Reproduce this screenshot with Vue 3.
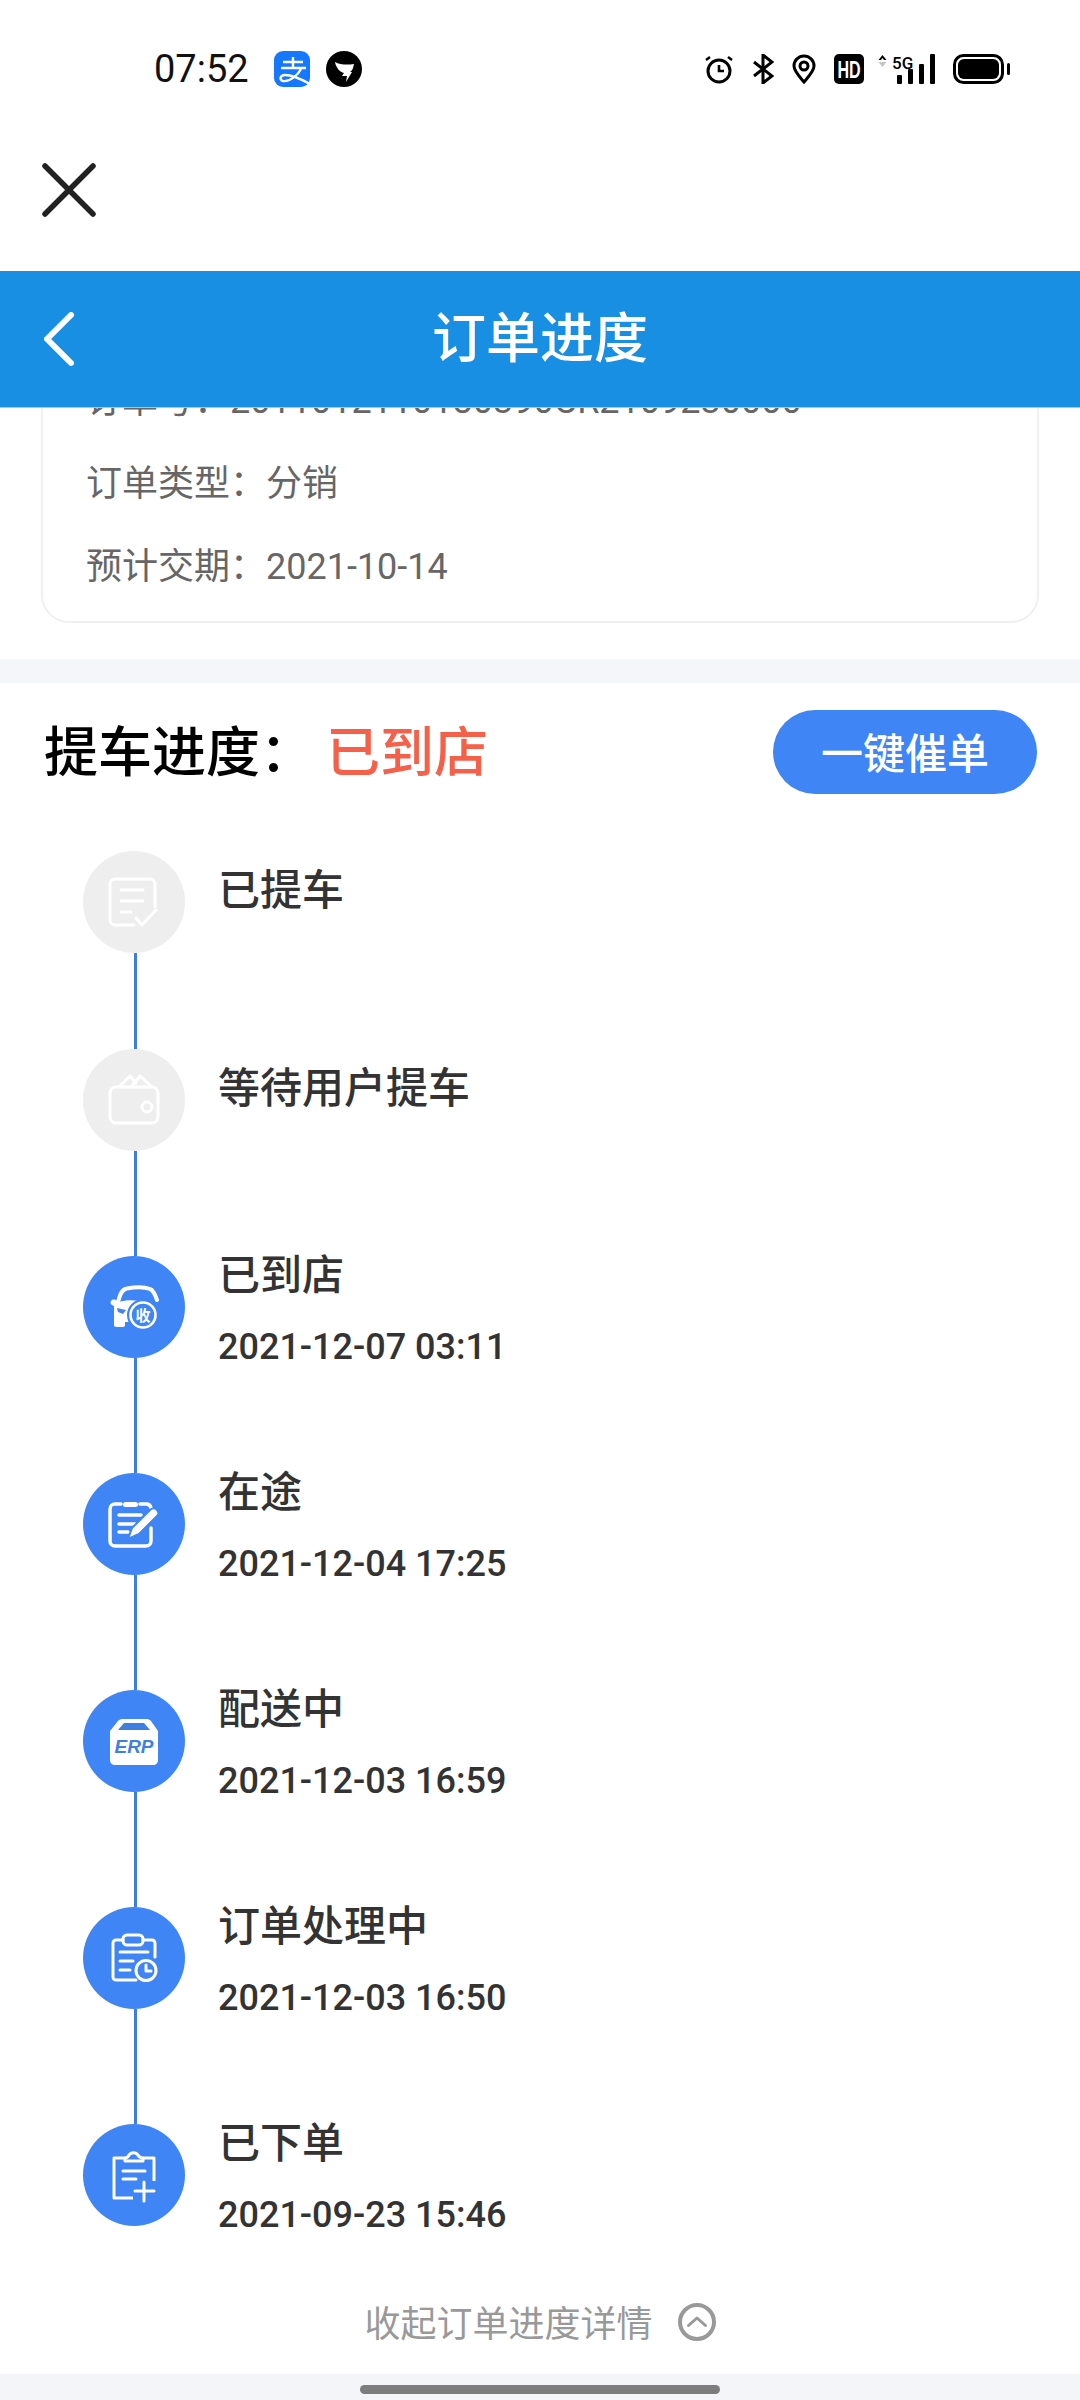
<script setup>
const orderRows = [
  { label: '订单号：', value: '2011012110180390CR2109230000' },
  { label: '订单类型：', value: '分销' },
  { label: '预计交期：', value: '2021-10-14' }
];

const steps = [
  { icon: 'doc', title: '已提车', date: '', size: 'short', pending: true },
  { icon: 'wallet', title: '等待用户提车', date: '', size: 'mid', pending: true },
  { icon: 'car', title: '已到店', date: '2021-12-07 03:11' },
  { icon: 'edit', title: '在途', date: '2021-12-04 17:25' },
  { icon: 'erp', title: '配送中', date: '2021-12-03 16:59' },
  { icon: 'clock', title: '订单处理中', date: '2021-12-03 16:50' },
  { icon: 'plus', title: '已下单', date: '2021-09-23 15:46', size: 'last' }
];
</script>

<template>
  <div class="page">
    <!-- status bar -->
    <div class="status">
      <span class="time">07:52</span>
      <svg class="app-logo" viewBox="0 0 36 36">
        <rect width="36" height="36" rx="9" fill="#1677ff" />
        <path d="M9 11h20M7 17h25M19 6v11" fill="none" stroke="#fff" stroke-width="2.400" />
        <path d="M27 18c-3 6-11 13-18 12-4-1-3-6 2-6 6 0 16 4 25 9" fill="none" stroke="#fff" stroke-width="2.400" />
      </svg>
      <svg class="app-logo" viewBox="0 0 36 36">
        <circle cx="18" cy="18" r="18" fill="#000" />
        <path d="M9 11c5 3 13 3 19 2-1 5-2 7-4 8h2l-6 10 1-6h-5l2-3c-4-1-8-5-9-11z" fill="#fff" />
      </svg>

      <div class="status-right">
        <svg class="ico30" viewBox="0 0 30 30" fill="none" stroke="#000" stroke-width="3">
          <circle cx="15" cy="17" r="11" />
          <path d="M15 11v6h5" stroke-width="2.600" />
          <path d="M2 6l4-3M28 6l-4-3" stroke-width="2.400" />
        </svg>
        <svg class="ico-bt" viewBox="0 0 22 30" fill="none" stroke="#000" stroke-width="3">
          <path d="M2 8l18 14-9 7V1l9 7L2 22" />
        </svg>
        <svg class="ico-pin" viewBox="0 0 24 30" fill="none" stroke="#000" stroke-width="3">
          <path d="M12 28C7 22 2 17 2 12a10 10 0 0 1 20 0c0 5-5 10-10 16z" />
          <circle cx="12" cy="12" r="4" />
        </svg>
        <svg class="ico30" viewBox="0 0 30 30">
          <rect width="30" height="30" rx="5" fill="#000" />
          <text transform="translate(3.500 23.500) scale(.7 1)" class="hd-text">HD</text>
        </svg>
        <svg class="ico-net" viewBox="0 0 57 30">
          <path d="M0.500 6l4-5 4 5h-2.500l-1.500-2-1.500 2z" fill="#000" />
          <path d="M0.500 8l4 5 4-5z" fill="#c4c4c4" />
          <text x="14" y="15" class="net-text">5G</text>
          <rect x="19" y="21" width="5" height="9" rx="1" />
          <rect x="30" y="15" width="5" height="15" rx="1" />
          <rect x="41" y="10" width="5" height="20" rx="1" />
          <rect x="52" y="0" width="5" height="30" rx="1" />
        </svg>
        <svg class="ico-bat" viewBox="0 0 57 30">
          <rect x="1.500" y="1.500" width="48" height="27" rx="9" fill="none" stroke="#000" stroke-width="3" />
          <rect x="5" y="5" width="41" height="20" rx="6" fill="#000" />
          <rect x="54" y="9" width="3" height="12" rx="1.500" fill="#000" />
        </svg>
      </div>
    </div>

    <div class="toolbar">
      <svg class="close" viewBox="0 0 54 54" fill="none" stroke="#222" stroke-width="5.500" stroke-linecap="round">
        <path d="M3 3l48 48M51 3L3 51" />
      </svg>
    </div>

    <header class="header">
      <svg class="back" viewBox="0 0 30 54" fill="none" stroke="#fff" stroke-width="6" stroke-linecap="round" stroke-linejoin="round">
        <path d="M27 3L3 27l24 24" />
      </svg>
      <h1 class="header-title">订单进度</h1>
    </header>

    <section class="order">
      <div class="order-card">
        <div v-for="row in orderRows" :key="row.label" class="order-row">{{ row.label }}{{ row.value }}</div>
      </div>
    </section>

    <section class="progress">
      <div class="progress-head">
        <div class="progress-title">
          <span>提车进度：</span>
          <span class="progress-state">已到店</span>
        </div>
        <div class="urge-btn">一键催单</div>
      </div>

      <div class="timeline">
        <div v-for="step in steps" :key="step.title" :class="['step', step.size && `step-${step.size}`]">
          <div class="rail">
            <div :class="['node', { 'node-pending': step.pending }]">
              <svg viewBox="0 0 102 102" fill="none" stroke="#fff" stroke-width="3" stroke-linecap="round" stroke-linejoin="round">
                <template v-if="step.icon === 'doc'">
                  <path d="M51 74H32a5 5 0 0 1-5-5V33a5 5 0 0 1 5-5h35a5 5 0 0 1 5 5v23" />
                  <path d="M38 39h22M38 50h22M38 61h10M53 67l6 7 14-15" />
                </template>
                <template v-else-if="step.icon === 'wallet'">
                  <rect x="27" y="38" width="48" height="36" rx="6" />
                  <circle cx="64" cy="58" r="5" />
                  <path d="M37 37l10-10 6 7M49 37l8-10 11 10" />
                </template>
                <template v-else-if="step.icon === 'car'">
                  <path d="M35 46c2-8 4-13 9-13.500 8-1.500 18-1.500 23 .5 3 1 5 5 7 11" stroke-width="4" />
                  <path d="M36 46c6-2 14-2 20-1l-4 14-6 3v4h-4v3c0 1-1 2-2 2h-7c-1 0-2-1-2-2V50l-2-1c-2-1-2-4 0-5 2-1 4 0 5 1z" fill="#fff" stroke="none" />
                  <path d="M34 52l9 2-3 4-5-2z" fill="#3f85f5" stroke="none" />
                  <circle cx="60" cy="59" r="14.500" fill="#3f85f5" stroke="#3f85f5" stroke-width="3" />
                  <circle cx="60" cy="59" r="12.500" stroke-width="2.600" />
                  <text x="60" y="65" class="badge-text">收</text>
                </template>
                <template v-else-if="step.icon === 'edit'">
                  <path d="M38 31h-6a5 5 0 0 0-5 5v32a5 5 0 0 0 5 5h31a5 5 0 0 0 5-5V55M57 31h6a5 5 0 0 1 5 4" stroke-width="3.500" />
                  <rect x="40" y="29" width="15" height="5" rx="2.500" fill="#fff" stroke="none" />
                  <path d="M36 42h22M36 51h16M36 59h9" stroke-width="3.500" />
                  <path d="M45 66l4-11 18-18c2-2 5-2 7 0s2 4 0 6L56 61z" fill="#fff" stroke="#3f85f5" stroke-width="2" />
                </template>
                <template v-else-if="step.icon === 'erp'">
                  <path d="M39 29h25c2 0 3 1 4 2l7 10v29c0 3-2 5-5 5H32c-3 0-5-2-5-5V41l8-10c1-1 2-2 4-2z" fill="#fff" stroke="none" />
                  <path d="M41 33h20l6 7H35z" fill="#3f7fe0" stroke="none" />
                  <text x="51" y="63" class="erp-text">ERP</text>
                </template>
                <template v-else-if="step.icon === 'clock'">
                  <path d="M72 50V36a3 3 0 0 0-3-3h-9M40 33h-7a3 3 0 0 0-3 3v34a3 3 0 0 0 3 3h20" />
                  <rect x="40" y="28" width="20" height="10" rx="4" />
                  <path d="M37 45h28M37 54h13M37 63h10" />
                  <circle cx="63" cy="63.500" r="10" fill="#3f85f5" />
                  <path d="M63 58v6h5" />
                </template>
                <template v-else-if="step.icon === 'plus'">
                  <path d="M71 57V34H60M42 34H31v40h19" stroke-linecap="butt" />
                  <path d="M42 37v-3c2 0 3-1 4-3 2-3 7-3 9 0 1 2 2 3 5 3v3z" />
                  <path d="M40 47h22M40 55h13M52 67h19M61 58v19" />
                </template>
              </svg>
            </div>
            <div v-if="step.size !== 'last'" class="connector"></div>
          </div>
          <div :class="['step-text', { 'step-text-pending': step.pending }]">
            <div class="step-title">{{ step.title }}</div>
            <div v-if="step.date" class="step-date">{{ step.date }}</div>
          </div>
        </div>
      </div>

      <div class="collapse">
        <span class="collapse-label">收起订单进度详情</span>
        <svg viewBox="0 0 38 38" fill="none" stroke="#999" stroke-width="4" stroke-linecap="round" stroke-linejoin="round">
          <circle cx="19" cy="19" r="17" />
          <path d="M10.500 22.500L19 15l8.500 7.500" stroke-width="3" />
        </svg>
      </div>
    </section>

    <div class="home-bar">
      <div class="home-indicator"></div>
    </div>
  </div>
</template>

<style>
body {
  margin: 0;
  background: #fff;
}
</style>

<style scoped>
.page {
  width: 1080px;
  height: 2400px;
  overflow: hidden;
  display: flex;
  flex-direction: column;
  background: #fff;
  font-family: "Noto Sans CJK SC", "Noto Sans", sans-serif;
  color: #333;
}

.status {
  height: 138px;
  flex: none;
  display: flex;
  align-items: center;
  padding: 0 70px 0 154px;
  box-sizing: border-box;
}

.time {
  width: 120px;
  font-family: Roboto, sans-serif;
  font-size: 38px;
  color: #111;
}

.app-logo {
  width: 36px;
  height: 36px;
  margin-right: 16px;
}

.status-right {
  margin-left: auto;
  display: flex;
  align-items: center;
  gap: 18px;
}

.ico30 {
  width: 30px;
  height: 30px;
}

.ico-bt {
  width: 22px;
  height: 30px;
}

.ico-pin {
  width: 24px;
  height: 30px;
}

.hd-text {
  font-family: "Liberation Sans", sans-serif;
  font-size: 23px;
  font-weight: 700;
  fill: #fff;
}

.ico-net {
  width: 57px;
  height: 30px;
  margin-left: -4px;
}

.net-text {
  font-family: Roboto, sans-serif;
  font-size: 17px;
  font-weight: 500;
}

.ico-bat {
  width: 57px;
  height: 30px;
}

.toolbar {
  height: 133px;
  flex: none;
  padding: 25px 0 0 42px;
  box-sizing: border-box;
}

.close {
  display: block;
  width: 54px;
  height: 54px;
}

.header {
  position: relative;
  z-index: 1;
  height: 136px;
  flex: none;
  display: grid;
  grid-template-columns: 1fr auto 1fr;
  align-items: center;
  background: #188fe3;
  box-shadow: 0 1px 0 #8fd0f5;
}

.back {
  width: 30px;
  height: 54px;
  margin-left: 44px;
}

.header-title {
  margin: 0;
  padding-bottom: 9px;
  font-size: 54px;
  font-weight: 500;
  color: #fff;
}

.order {
  flex: none;
  padding: 0 41px 36px;
}

.order-card {
  margin-top: -59px;
  padding: 10px 0 12px 43px;
  border: 2px solid #f0f0f0;
  border-radius: 28px;
}

.order-row {
  height: 83px;
  line-height: 83px;
  font-size: 36px;
  color: #666;
  font-family: Roboto, "Noto Sans CJK SC", sans-serif;
}

.progress {
  flex: 1;
  margin-top: 24px;
  min-height: 0;
  box-shadow: 0 -24px 0 #f4f6f9;
}

.progress-head {
  display: flex;
  align-items: center;
  justify-content: space-between;
  padding: 27px 43px 0 44px;
}

.progress-title {
  display: flex;
  align-items: center;
  gap: 12px;
  padding-bottom: 6px;
  line-height: 70px;
  font-size: 54px;
  font-weight: 500;
  color: #000;
}

.progress-state {
  color: #f4604a;
}

.urge-btn {
  width: 264px;
  height: 84px;
  border-radius: 42px;
  background: #3f85f5;
  color: #fff;
  font-size: 42px;
  font-weight: 500;
  line-height: 82px;
  text-align: center;
}

.timeline {
  padding: 57px 0 0 83px;
}

.step {
  display: flex;
  gap: 33px;
  height: 217px;
}

.step-short {
  height: 198px;
}

.step-mid {
  height: 207px;
}

.step-last {
  height: 148px;
}

.rail {
  flex: none;
  width: 102px;
  display: flex;
  flex-direction: column;
  align-items: center;
}

.node {
  flex: none;
  width: 102px;
  height: 102px;
  border-radius: 50%;
  background: #3f85f5;
}

.node svg {
  display: block;
  width: 102px;
  height: 102px;
}

.node-pending {
  background: #eeeeee;
}

.badge-text {
  font-family: "Noto Sans CJK SC", sans-serif;
  font-size: 15px;
  font-weight: 700;
  text-anchor: middle;
  fill: #fff;
  stroke: none;
}

.erp-text {
  font-family: "Liberation Sans", sans-serif;
  font-size: 19px;
  font-weight: 700;
  font-style: italic;
  text-anchor: middle;
  fill: #3f7fe0;
  stroke: none;
}

.connector {
  flex: 1;
  width: 3px;
  margin-left: 3px;
  background: #3f7de0;
}

.step-text {
  margin-top: -7px;
}

.step-text-pending {
  margin-top: 13px;
}

.step-title {
  height: 52px;
  line-height: 46px;
  font-size: 42px;
  font-weight: 500;
}

.step-date {
  margin-top: 24px;
  height: 44px;
  line-height: 44px;
  font-family: Roboto, sans-serif;
  font-size: 36px;
  font-weight: 500;
}

.collapse {
  height: 100px;
  display: flex;
  align-items: center;
  justify-content: center;
  gap: 25px;
  font-size: 36px;
  color: #999;
}

.collapse-label {
  margin-bottom: 3px;
}

.collapse svg {
  width: 38px;
  height: 38px;
}

.home-bar {
  height: 26px;
  flex: none;
  padding-top: 11px;
  box-sizing: border-box;
  background: #f4f5f9;
}

.home-indicator {
  width: 360px;
  height: 9px;
  margin: 0 auto;
  border-radius: 5px;
  background: #7d7d7d;
}
</style>
